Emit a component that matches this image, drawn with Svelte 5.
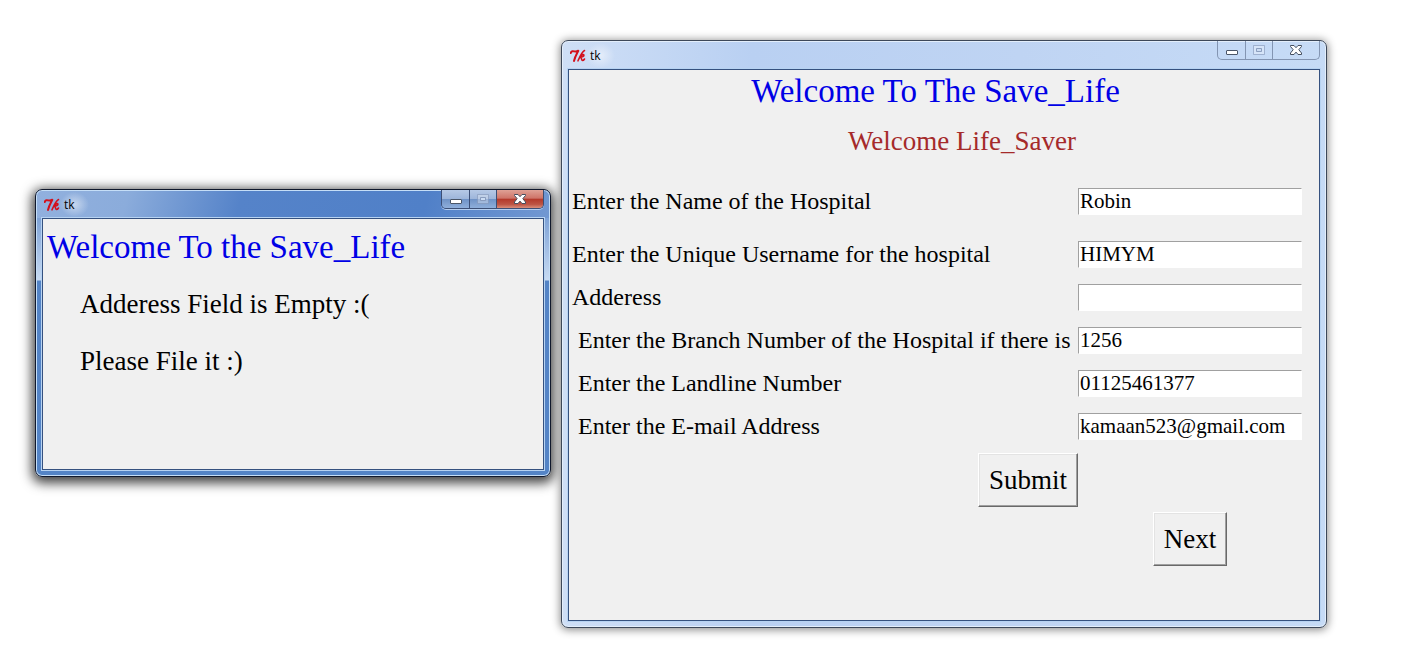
<script>
  let name = $state('Robin');
  let username = $state('HIMYM');
  let address = $state('');
  let branch = $state('1256');
  let landline = $state('01125461377');
  let email = $state('kamaan523@gmail.com');
</script>

{#snippet titlebar()}
  <header class="titlebar">
    <svg class="tk-icon" width="16" height="14" viewBox="0 0 16 14" aria-hidden="true">
      <path d="M0.800 4 C1.200 1.800 3 2 4.500 2.400 C6 2.800 7 2.500 8.300 1.700 C7 4.300 5 7.500 4 12" />
      <path class="fine" d="M14.500 1.500 C12.300 2.500 10.300 6.500 8 11.800 M9.500 8.500 C11 6.500 13.300 4.700 13.900 6 C14.300 7.300 12 8.300 10.400 8.400 C12 8.500 11.200 11.400 12.500 11.500 C13.300 11.500 14 10.800 14.500 10" />
    </svg>
    <span class="caption">tk</span>
    <div class="controls">
      <button type="button" class="minimize" aria-label="Minimize">
        <svg width="14" height="12" viewBox="0 0 14 12"><rect x="1.500" y="6.500" width="11" height="4" rx="0.500" fill="#fff" stroke="#4b5668" /></svg>
      </button>
      <button type="button" class="maximize" aria-label="Maximize" disabled>
        <svg width="14" height="12" viewBox="0 0 14 12"><path d="M1.500 1.500h11v9h-11z" fill="#fff" fill-opacity="0.300" stroke="#8093b5" stroke-opacity="0.600" /><path d="M4.500 4.500h5v3h-5z" fill="#cbdcf3" stroke="#8093b5" stroke-opacity="0.850" /></svg>
      </button>
      <button type="button" class="close" aria-label="Close">
        <svg width="14" height="12" viewBox="0 0 14 12"><path d="M1.500 1.500h3.500l2 2.200l2-2.200h3.500v1l-2.700 3.200l2.700 3.300v1.500h-3.500l-2-2.400l-2 2.400h-3.500v-1.500l2.700-3.300l-2.700-3.200z" fill="#fff" stroke="#454f5f" stroke-width="1" /></svg>
      </button>
    </div>
  </header>
{/snippet}

<main class="desktop">
  <section class="window active">
    {@render titlebar()}
    <div class="client message">
      <h1>Welcome To the Save_Life</h1>
      <p>Adderess Field is Empty :(</p>
      <p>Please File it :)</p>
    </div>
  </section>

  <section class="window inactive">
    {@render titlebar()}
    <div class="client">
      <form onsubmit={(e) => e.preventDefault()}>
        <h1>Welcome To The Save_Life</h1>
        <h2>Welcome Life_Saver</h2>
        <div class="row tall">
          <label for="name">Enter the Name of the Hospital</label>
          <input id="name" type="text" bind:value={name} />
        </div>
        <div class="row">
          <label for="username">Enter the Unique Username for the hospital</label>
          <input id="username" type="text" bind:value={username} />
        </div>
        <div class="row">
          <label for="address">Adderess</label>
          <input id="address" type="text" bind:value={address} />
        </div>
        <div class="row">
          <label class="indent" for="branch">Enter the Branch Number of the Hospital if there is</label>
          <input id="branch" type="text" bind:value={branch} />
        </div>
        <div class="row">
          <label class="indent" for="landline">Enter the Landline Number</label>
          <input id="landline" type="text" bind:value={landline} />
        </div>
        <div class="row">
          <label class="indent" for="email">Enter the E-mail Address</label>
          <input id="email" type="text" bind:value={email} />
        </div>
        <div class="row actions">
          <button class="push submit" type="submit">Submit</button>
          <button class="push next" type="button">Next</button>
        </div>
      </form>
    </div>
  </section>
</main>

<style>
  :global(body) {
    background: #fff;
  }

  .desktop {
    display: grid;
    grid-template-columns: 516fr 766fr;
    column-gap: 10px;
    align-items: start;
    padding: 40px 78px 20px 35px;
    font-family: 'Liberation Serif', 'Times New Roman', serif;
    color: #000;
  }

  .window {
    display: flex;
    flex-direction: column;
    box-sizing: border-box;
    min-width: 0;
    padding: 0 6px 6px;
    border: 1px solid;
    border-radius: 7px;
  }

  .active {
    min-height: 288px;
    margin-top: 149px;
    border-color: #10182c;
    background:
      linear-gradient(105deg, #91b0de 0, #8bacdb 90px, #5583c9 200px, #5080c8 380px, #7298d2 100%) 0 0 / 100% 28px no-repeat,
      linear-gradient(180deg, #7ea2d6 28px, #c7daf2 90px, #5484c6 91px, #5484c6 100%);
    box-shadow:
      inset 0 0 0 1px #c5def7,
      0 3px 12px 3px rgba(0, 0, 0, 0.75);
  }

  .inactive {
    min-height: 588px;
    border-color: #3d4859;
    background: linear-gradient(90deg, #cfdff6 0, #b9d0f2 190px, #bfd4f3 60%, #c6dbf6 100%);
    box-shadow:
      inset 0 0 0 1px #e3eefb,
      0 1px 8px 1px rgba(0, 0, 0, 0.45);
  }

  .titlebar {
    display: flex;
    align-items: flex-start;
    height: 28px;
    padding-left: 2px;
  }

  .tk-icon {
    margin-top: 8px;
    fill: none;
    stroke: #d3101c;
    stroke-width: 2;
    stroke-linecap: round;
    stroke-linejoin: round;
  }

  .tk-icon .fine {
    stroke-width: 1.600;
  }

  .caption {
    margin: 2px 0 0;
    padding: 4px 14px 4px 4px;
    background: radial-gradient(closest-side, rgba(255, 255, 255, 0.5), rgba(255, 255, 255, 0));
    font: 12px/17px 'Open Sans', sans-serif;
  }

  .controls {
    display: flex;
    box-sizing: border-box;
    height: 19px;
    margin-left: auto;
    border: 1px solid;
    border-top: 0;
    border-radius: 0 0 5px 5px;
    overflow: hidden;
  }

  .controls button {
    display: flex;
    align-items: center;
    justify-content: center;
    box-sizing: border-box;
    width: 28px;
    padding: 0;
    border: 0;
    border-right: 1px solid;
    border-color: inherit;
    background: transparent;
  }

  .controls .maximize {
    width: 27px;
  }

  .controls .close {
    width: 46px;
    border-right: 0;
  }

  .active .controls {
    border-color: #3c4f76;
    box-shadow: 0 1px 0 #b4cdef;
  }

  .active .controls button {
    background: linear-gradient(180deg, #b6c9e6 0, #9db5da 50%, #6f92c6 51%, #8fafdb 100%);
  }

  .active .controls .close {
    background: linear-gradient(180deg, #dfa195 0, #ce7468 46%, #b3382a 50%, #bd5545 80%, #d98f7c 100%);
  }

  .inactive .controls {
    border-color: #8395b2;
  }

  .client {
    flex: 1;
    border: 1px solid #35517f;
    background: #f0f0f0;
    box-shadow: 0 0 0 1px #b7d3f2;
  }

  h1,
  h2,
  p {
    margin: 0;
    font-weight: 400;
  }

  h1 {
    font-size: 33px;
    line-height: 36px;
    color: #0000e6;
  }

  .message {
    padding: 10px 4px;
  }

  p {
    margin: 19px 33px 0;
    font-size: 27px;
    line-height: 38px;
  }

  .message h1 {
    margin-bottom: 20px;
  }

  form {
    padding: 3px 17px 0 0;
  }

  form h1 {
    text-align: center;
  }

  h2 {
    margin: 14px 0 29px 53px;
    font-size: 27px;
    line-height: 36px;
    text-align: center;
    color: #a52a2a;
  }

  .row {
    display: grid;
    grid-template-columns: 1fr 224px;
    align-items: center;
    min-height: 27px;
    margin-bottom: 16px;
  }

  .tall {
    margin-bottom: 26px;
  }

  label {
    padding-left: 3px;
    font-size: 24px;
    line-height: 27px;
    white-space: nowrap;
  }

  .indent {
    padding-left: 9px;
  }

  input {
    box-sizing: border-box;
    width: 100%;
    height: 27px;
    padding: 0 1px;
    border: 1px solid;
    border-color: #a0a0a0 #fff #fff #a0a0a0;
    background: #fff;
    font: 21px/25px 'Liberation Serif', 'Times New Roman', serif;
    color: #000;
    outline: 0;
  }

  .actions {
    row-gap: 5px;
    margin: -3px 0 0;
  }

  .push {
    height: 54px;
    padding: 0 10px;
    border: 1px solid;
    border-color: #fff #696969 #696969 #fff;
    background: #f0f0f0;
    box-shadow:
      inset -1px -1px 0 #a0a0a0,
      inset 1px 1px 0 #e3e3e3;
    font: 27px/36px 'Liberation Serif', 'Times New Roman', serif;
    color: #000;
  }

  .submit {
    justify-self: end;
  }

  .next {
    grid-area: 2 / 2;
    justify-self: center;
  }
</style>
